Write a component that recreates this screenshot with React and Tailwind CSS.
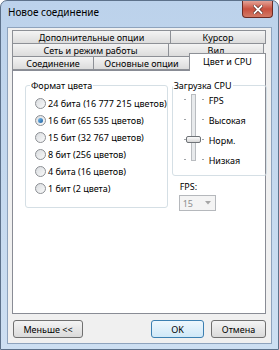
import React from 'react';

const font = { fontFamily: '"Noto Sans", "Open Sans", sans-serif' };

function Tab({ label, className = '' }) {
  return (
    <div
      className={`h-full flex items-center justify-center border border-[#8d9096] bg-gradient-to-b from-[#f4f4f4] to-[#dcdcdc] text-[9px] leading-none text-black ${className}`}
    >
      {label}
    </div>
  );
}

function Radio({ label, checked }) {
  return (
    <div className="flex items-center h-[17px]">
      <div className="w-[11px] h-[11px] rounded-full border border-[#8c8f94] bg-gradient-to-br from-[#d9dcdf] to-[#fafafa] flex items-center justify-center">
        {checked && (
          <div className="w-[5px] h-[5px] rounded-full bg-gradient-to-br from-[#7bc0f0] to-[#1c5f9e]" />
        )}
      </div>
      <span className="ml-[2px] text-[9px] leading-none text-black whitespace-nowrap">{label}</span>
    </div>
  );
}

function Button({ label, primary, className = '' }) {
  return (
    <div
      className={`h-[18px] flex items-center justify-center rounded-[3px] border text-[9px] leading-none text-black ${
        primary
          ? 'border-[#3c7fb1] bg-gradient-to-b from-[#eef7fd] to-[#cfe8f8]'
          : 'border-[#707070] bg-gradient-to-b from-[#f4f4f4] to-[#dadada]'
      } ${className}`}
    >
      {label}
    </div>
  );
}

export default function App() {
  const levels = ['FPS', 'Высокая', 'Норм.', 'Низкая'];
  const tickTops = [9, 29, 49, 69];

  return (
    <div style={font} className="w-[279px] h-[350px] flex flex-col rounded-t-[7px] border border-[#5d718a] bg-gradient-to-b from-[#bcd2eb] to-[#cddff2]">
      {/* Title bar */}
      <div className="h-[26px] flex items-start justify-between">
        <span className="pl-[7px] pt-[6px] text-[10px] leading-none text-black">Новое соединение</span>
        <div className="mr-[5px] w-[31px] h-[17px] rounded-b-[4px] border border-t-0 border-[#6b2b24] bg-gradient-to-b from-[#e3a196] via-[#c8503f] to-[#d27a66] flex items-center justify-center">
          <svg width="10" height="9" viewBox="0 0 10 9">
            <path d="M1.5 1 L8.5 8 M8.5 1 L1.5 8" stroke="#5a2a24" strokeWidth="3.2" strokeLinecap="square" />
            <path d="M1.5 1 L8.5 8 M8.5 1 L1.5 8" stroke="#ffffff" strokeWidth="1.8" strokeLinecap="square" />
          </svg>
        </div>
      </div>

      {/* Client area */}
      <div className="mx-[6px] h-[317px] border border-[#8ea3bd] bg-[#f0f0f0] pl-[4px] pr-[5px] pt-[2px] flex flex-col">
        {/* Tab rows */}
        <div className="flex h-[14px]">
          <Tab label="Дополнительные опции" className="w-[159px]" />
          <Tab label="Курсор" className="flex-1 -ml-px" />
        </div>
        <div className="flex h-[14px] -mt-px mr-[2px]">
          <Tab label="Сеть и режим работы" className="w-[157px]" />
          <Tab label="Вид" className="flex-1 -ml-px" />
        </div>
        <div className="flex items-end h-[14px] -mt-px">
          <Tab label="Соединение" className="w-[82px]" />
          <Tab label="Основные опции" className="w-[97px] -ml-px" />
          <div className="relative z-10 -ml-px -mb-px flex-1 h-[18px] border border-b-0 border-[#8d9096] bg-white flex items-start justify-center pt-[3px] text-[9px] leading-none text-black">
            Цвет и CPU
          </div>
        </div>

        {/* Tab panel */}
        <div className="h-[244px] border border-[#898c95] bg-white pl-[12px] pt-[10px] flex items-start gap-[4px]">
          <fieldset className="w-[138px] h-[127px] border border-[#d5dfe5] rounded-[3px] pl-[9px]">
            <legend className="ml-[-5px] px-[1px] text-[9px] leading-none text-black">Формат цвета</legend>
            <div className="mt-[5px] flex flex-col">
              <Radio label="24 бита (16 777 215 цветов)" />
              <Radio label="16 бит (65 535 цветов)" checked />
              <Radio label="15 бит (32 767 цветов)" />
              <Radio label="8 бит (256 цветов)" />
              <Radio label="4 бита (16 цветов)" />
              <Radio label="1 бит (2 цвета)" />
            </div>
          </fieldset>

          <div className="flex flex-col">
            <fieldset className="w-[95px] h-[95px] border border-[#d5dfe5] rounded-[3px] pl-[9px]">
              <legend className="ml-[-9px] px-[1px] text-[9px] leading-none text-black">Загрузка CPU</legend>
              <div className="flex">
                <div className="relative w-[24px] h-[80px]">
                  <div className="absolute left-[9px] top-[4px] w-[5px] h-[67px] border border-[#b9bcc0] bg-[#e8eaec]" />
                  {tickTops.map((t) => (
                    <React.Fragment key={t}>
                      <div className="absolute left-[2px] w-[2px] h-px bg-[#a0a4a8]" style={{ top: t }} />
                      <div className="absolute left-[20px] w-[2px] h-px bg-[#a0a4a8]" style={{ top: t }} />
                    </React.Fragment>
                  ))}
                  <div className="absolute left-[4px] top-[46px] w-[15px] h-[7px] rounded-[2px] border border-[#6f7377] bg-gradient-to-b from-[#fbfbfb] to-[#d8d8d8]" />
                </div>
                <div className="ml-[3px] flex flex-col">
                  {levels.map((l) => (
                    <div key={l} className="h-[20px] flex items-center text-[9px] leading-none text-black">
                      {l}
                    </div>
                  ))}
                </div>
              </div>
            </fieldset>
            <div className="ml-[8px] mt-[6px] text-[9px] leading-none text-black">FPS:</div>
            <div className="ml-[7px] mt-[4px] w-[37px] h-[16px] border border-[#b5b8bc] bg-[#f4f4f4] flex items-center justify-between pl-[3px] pr-[4px]">
              <span className="text-[9px] leading-none text-[#8d8d8d]">15</span>
              <svg width="6" height="4" viewBox="0 0 6 4">
                <path d="M0 0 L6 0 L3 3.5 Z" fill="#a6a6a6" />
              </svg>
            </div>
          </div>
        </div>

        {/* Buttons */}
        <div className="flex pt-[6px] pl-[1px]">
          <Button label="Меньше <<" className="w-[70px]" />
          <div className="flex-1" />
          <Button label="OK" primary className="w-[53px]" />
          <Button label="Отмена" className="w-[55px] ml-[7px]" />
        </div>
      </div>
    </div>
  );
}
